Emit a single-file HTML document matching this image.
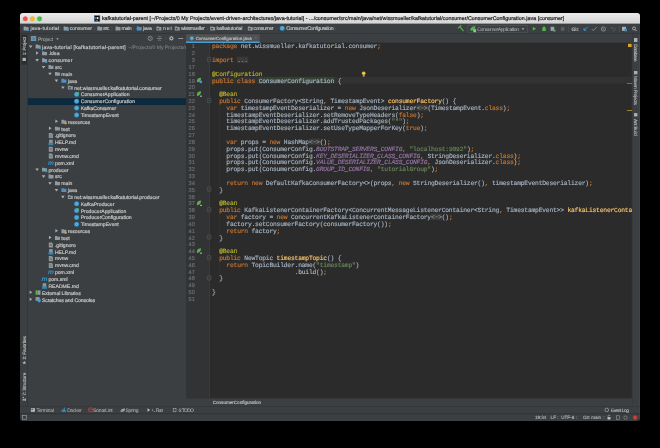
<!DOCTYPE html><html><head><meta charset="utf-8"><style>*{margin:0;padding:0}html,body{width:660px;height:448px;overflow:hidden;background:#000}svg{display:block;will-change:transform;text-rendering:geometricPrecision}</style></head><body><svg width="660" height="448" viewBox="0 0 660 448"><rect width="660" height="448" fill="#000"/><defs><clipPath id="wclip"><rect x="20" y="13" width="620" height="408.1" rx="3"/></clipPath><clipPath id="tree"><rect x="27.5" y="43" width="158.5" height="363"/></clipPath><clipPath id="code"><rect x="186" y="43" width="446" height="355"/></clipPath><linearGradient id="tg" x1="0" y1="0" x2="0" y2="1"><stop offset="0" stop-color="#ebebeb"/><stop offset="1" stop-color="#d4d4d4"/></linearGradient></defs>
<g clip-path="url(#wclip)">
<rect x="20.00" y="13.00" width="620.00" height="408.10" fill="#3c3f41" />
<rect x="20.00" y="13.00" width="620.00" height="10.60" fill="url(#tg)" />
<rect x="20.00" y="23.40" width="620.00" height="0.50" fill="#9d9d9d" />
<circle cx="25.30" cy="18.80" r="2.30" fill="#f2544c" stroke="#d2413a" stroke-width="0.3"/>
<circle cx="32.40" cy="18.80" r="2.30" fill="#f7b928" stroke="#d99c1c" stroke-width="0.3"/>
<circle cx="39.50" cy="18.80" r="2.30" fill="#3ec23c" stroke="#2b9f2a" stroke-width="0.3"/>
<rect x="94.30" y="15.60" width="5.60" height="5.90" fill="#0d0d0d" stroke="#4678b8" stroke-width="0.5"/>
<rect x="95.60" y="17.00" width="0.60" height="2.20" fill="#e0e0e0" />
<rect x="96.80" y="17.00" width="1.60" height="2.20" fill="#e0e0e0" />
<rect x="95.60" y="20.20" width="2.40" height="0.40" fill="#e0e0e0" />
<text x="101.90" y="20.30" font-family="Liberation Sans" font-size="5.3" font-weight="normal" fill="#262626" textLength="462.40" lengthAdjust="spacing"  stroke="#262626" stroke-width="0.22">kafkatutorial-parent [~/Projects/0 My Projects/event-driven-architectures/java-tutorial] - .../consumer/src/main/java/net/wissmueller/kafkatutorial/consumer/ConsumerConfiguration.java [consumer]</text>
<rect x="20.00" y="33.20" width="620.00" height="0.60" fill="#2e3032" />
<path d="M23.60 26.50h2.1l0.5 0.6h2.4v3.3h-5z" fill="#8d9ba5" />
<rect x="26.90" y="29.10" width="1.90" height="1.90" fill="#389fd6" />
<text x="30.50" y="30.20" font-family="Liberation Sans" font-size="5.2" font-weight="normal" fill="#c4c4c4" textLength="28.50" lengthAdjust="spacing"  stroke="#c4c4c4" stroke-width="0.15">java-tutorial</text>
<path d="M63.60 26.50h2.1l0.5 0.6h2.4v3.3h-5z" fill="#8d9ba5" />
<rect x="66.90" y="29.10" width="1.90" height="1.90" fill="#389fd6" />
<text x="69.70" y="30.20" font-family="Liberation Sans" font-size="5.2" font-weight="normal" fill="#c4c4c4" textLength="22.40" lengthAdjust="spacing"  stroke="#c4c4c4" stroke-width="0.15">consumer</text>
<path d="M97.30 26.50h2.1l0.5 0.6h2.4v3.3h-5z" fill="#8d9ba5" />
<text x="103.30" y="30.20" font-family="Liberation Sans" font-size="5.2" font-weight="normal" fill="#c4c4c4" textLength="6.10" lengthAdjust="spacing"  stroke="#c4c4c4" stroke-width="0.15">src</text>
<path d="M115.50 26.50h2.1l0.5 0.6h2.4v3.3h-5z" fill="#8d9ba5" />
<text x="121.50" y="30.20" font-family="Liberation Sans" font-size="5.2" font-weight="normal" fill="#c4c4c4" textLength="10.20" lengthAdjust="spacing"  stroke="#c4c4c4" stroke-width="0.15">main</text>
<path d="M136.70 26.50h2.1l0.5 0.6h2.4v3.3h-5z" fill="#4e93c6" />
<text x="143.00" y="30.20" font-family="Liberation Sans" font-size="5.2" font-weight="normal" fill="#c4c4c4" textLength="8.80" lengthAdjust="spacing"  stroke="#c4c4c4" stroke-width="0.15">java</text>
<path d="M156.40 26.50h2.1l0.5 0.6h2.4v3.3h-5z" fill="#8d9ba5" />
<rect x="157.40" y="28.10" width="1.80" height="1.30" fill="#3c3f41" />
<text x="163.00" y="30.20" font-family="Liberation Sans" font-size="5.2" font-weight="normal" fill="#c4c4c4" textLength="9.00" lengthAdjust="spacing"  stroke="#c4c4c4" stroke-width="0.15">net</text>
<path d="M174.80 26.50h2.1l0.5 0.6h2.4v3.3h-5z" fill="#8d9ba5" />
<rect x="175.80" y="28.10" width="1.80" height="1.30" fill="#3c3f41" />
<text x="180.90" y="30.20" font-family="Liberation Sans" font-size="5.2" font-weight="normal" fill="#c4c4c4" textLength="23.90" lengthAdjust="spacing"  stroke="#c4c4c4" stroke-width="0.15">wissmueller</text>
<path d="M210.20 26.50h2.1l0.5 0.6h2.4v3.3h-5z" fill="#8d9ba5" />
<rect x="211.20" y="28.10" width="1.80" height="1.30" fill="#3c3f41" />
<text x="216.50" y="30.20" font-family="Liberation Sans" font-size="5.2" font-weight="normal" fill="#c4c4c4" textLength="25.80" lengthAdjust="spacing"  stroke="#c4c4c4" stroke-width="0.15">kafkatutorial</text>
<path d="M247.80 26.50h2.1l0.5 0.6h2.4v3.3h-5z" fill="#8d9ba5" />
<rect x="248.80" y="28.10" width="1.80" height="1.30" fill="#3c3f41" />
<text x="253.60" y="30.20" font-family="Liberation Sans" font-size="5.2" font-weight="normal" fill="#c4c4c4" textLength="20.00" lengthAdjust="spacing"  stroke="#c4c4c4" stroke-width="0.15">consumer</text>
<circle cx="282.20" cy="28.30" r="2.50" fill="#3592c4" />
<circle cx="282.20" cy="28.30" r="1.12" fill="none" stroke="#a9d2ea" stroke-width="0.5"/>
<text x="286.20" y="30.20" font-family="Liberation Sans" font-size="5.2" font-weight="normal" fill="#c4c4c4" textLength="47.40" lengthAdjust="spacing"  stroke="#c4c4c4" stroke-width="0.15">ConsumerConfiguration</text>
<path d="M59.90 27.2l1.2 1.6-1.2 1.6" fill="none" stroke="#5d6062" stroke-width="0.45" />
<path d="M93.90 27.2l1.2 1.6-1.2 1.6" fill="none" stroke="#5d6062" stroke-width="0.45" />
<path d="M111.40 27.2l1.2 1.6-1.2 1.6" fill="none" stroke="#5d6062" stroke-width="0.45" />
<path d="M132.90 27.2l1.2 1.6-1.2 1.6" fill="none" stroke="#5d6062" stroke-width="0.45" />
<path d="M152.90 27.2l1.2 1.6-1.2 1.6" fill="none" stroke="#5d6062" stroke-width="0.45" />
<path d="M171.40 27.2l1.2 1.6-1.2 1.6" fill="none" stroke="#5d6062" stroke-width="0.45" />
<path d="M206.90 27.2l1.2 1.6-1.2 1.6" fill="none" stroke="#5d6062" stroke-width="0.45" />
<path d="M244.40 27.2l1.2 1.6-1.2 1.6" fill="none" stroke="#5d6062" stroke-width="0.45" />
<path d="M275.90 27.2l1.2 1.6-1.2 1.6" fill="none" stroke="#5d6062" stroke-width="0.45" />
<path d="M334.90 27.2l1.2 1.6-1.2 1.6" fill="none" stroke="#5d6062" stroke-width="0.45" />
<path d="M458.3 27.9l2.6-2.2 M459.9 26.9l3.3 3.8" fill="none" stroke="#4fb547" stroke-width="1.2" stroke-linecap="round"/>
<rect x="467.60" y="25.40" width="60.00" height="7.30" fill="#3c3f41" stroke="#5e6163" stroke-width="0.5" rx="0.8"/>
<path d="M470.2 30.2c0-2.8 2.2-4 5.2-4 0 2.8-1.5 4.6-4.6 4.6z" fill="#4fb547" />
<rect x="473.30" y="29.20" width="2.80" height="3.00" fill="#a9b4ba" />
<text x="477.30" y="30.60" font-family="Liberation Sans" font-size="5.1" font-weight="normal" fill="#bbbbbb" textLength="41.70" lengthAdjust="spacing" >ConsumerApplication</text>
<path d="M521.5 28.3h3l-1.5 1.8z" fill="#a5a8aa" />
<path d="M532.8 26.8v3.9l3.2-1.95z" fill="#4fb547" />
<path d="M542.2 30.9v-2.2a1.8 1.8 0 0 1 3.6 0v2.2z" fill="#4fb547" />
<rect x="543.00" y="26.60" width="2.00" height="1.40" fill="#4fb547" rx="0.5" />
<rect x="550.60" y="26.80" width="3.60" height="4.00" fill="#9aa5ad" />
<rect x="553.20" y="29.40" width="2.20" height="2.20" fill="#59a869" />
<rect x="560.90" y="27.20" width="3.60" height="3.60" fill="#5b5e60" />
<rect x="568.60" y="25.80" width="0.50" height="6.50" fill="#55585b" />
<text x="571.60" y="30.50" font-family="Liberation Sans" font-size="4.8" font-weight="normal" fill="#bbbbbb"  stroke="#bbbbbb" stroke-width="0.15">Git:</text>
<path d="M587.6 26.8l-3.3 3.3 M584.0 28.0v2.3h2.3" fill="none" stroke="#3e94d6" stroke-width="0.9" />
<path d="M591.8 29l1.5 1.6 3.2-3.4" fill="none" stroke="#59a869" stroke-width="0.9" />
<circle cx="603.40" cy="29.00" r="2.10" fill="none" stroke="#a5a8aa" stroke-width="0.65"/>
<path d="M602.4 27.8l1.8 2.6" fill="none" stroke="#a5a8aa" stroke-width="0.6" />
<path d="M611 28h3a1.4 1.4 0 0 1 0 2.8h-2 M611 28l1-1 M611 28l1 1" fill="none" stroke="#5f6264" stroke-width="0.6" />
<rect x="619.40" y="25.80" width="0.50" height="6.50" fill="#55585b" />
<rect x="622.00" y="26.80" width="4.00" height="4.00" fill="#a5b1b8" />
<rect x="624.60" y="28.60" width="2.40" height="2.80" fill="#3a8ac4" />
<circle cx="634.00" cy="28.40" r="1.50" fill="none" stroke="#c0c0c0" stroke-width="0.75"/>
<path d="M635.1 29.5l1.5 1.5" fill="none" stroke="#c0c0c0" stroke-width="0.9" />
<rect x="27.00" y="33.80" width="0.60" height="372.50" fill="#2f3133" />
<rect x="21.30" y="34.60" width="5.70" height="30.00" fill="#2c2e2f" />
<text transform="translate(26.00,55.20) rotate(-90)" font-family="Liberation Sans" font-size="4.7" fill="#bbbbbb" stroke="#bbbbbb" stroke-width="0.15" textLength="18.30" lengthAdjust="spacing">1: Project</text>
<rect x="22.50" y="57.80" width="3.40" height="3.20" fill="#a5b1b8" />
<text transform="translate(26.00,359.50) rotate(-90)" font-family="Liberation Sans" font-size="4.7" fill="#bbbbbb" stroke="#bbbbbb" stroke-width="0.15" textLength="23.25" lengthAdjust="spacing">2: Favorites</text>
<path d="M24.3 360.8l0.55 1.2 1.3 0.15-0.95 0.9 0.25 1.3-1.15-0.65-1.15 0.65 0.25-1.3-0.95-0.9 1.3-0.15z" fill="#b0b3b5" />
<text transform="translate(26.00,395.50) rotate(-90)" font-family="Liberation Sans" font-size="4.7" fill="#bbbbbb" stroke="#bbbbbb" stroke-width="0.15" textLength="22.80" lengthAdjust="spacing">7: Structure</text>
<rect x="22.60" y="396.90" width="1.30" height="1.30" fill="#b0b3b5" />
<rect x="22.60" y="399.00" width="1.30" height="1.60" fill="#b0b3b5" />
<rect x="24.40" y="398.60" width="1.60" height="2.20" fill="#b0b3b5" />
<rect x="30.90" y="36.10" width="5.30" height="4.90" fill="#8d969b" />
<rect x="31.60" y="37.30" width="3.90" height="3.00" fill="#3b8fc6" />
<text x="38.00" y="40.60" font-family="Liberation Sans" font-size="5.1" font-weight="normal" fill="#bbbbbb" textLength="15.00" lengthAdjust="spacing" >Project</text>
<path d="M56.2 38.2h2.6l-1.3 1.7z" fill="#a5a8aa" />
<circle cx="150.20" cy="38.40" r="2.10" fill="none" stroke="#a4a7aa" stroke-width="0.6"/>
<path d="M149.5 37.2l1.3 1.2-1.3 1.2" fill="none" stroke="#a4a7aa" stroke-width="0.6" />
<path d="M157 38.4h5 M158.3 35.9l1.2 1.2 1.2-1.2 M158.3 40.9l1.2-1.2 1.2 1.2" fill="none" stroke="#a4a7aa" stroke-width="0.6" />
<rect x="165.20" y="35.30" width="0.50" height="6.20" fill="#4d5052" />
<path d="M173.95 38.40 L173.11 39.11 L173.20 40.20 L172.11 40.11 L171.40 40.95 L170.69 40.11 L169.60 40.20 L169.69 39.11 L168.85 38.40 L169.69 37.69 L169.60 36.60 L170.69 36.69 L171.40 35.85 L172.11 36.69 L173.20 36.60 L173.11 37.69z" fill="#a4a7aa" />
<circle cx="171.40" cy="38.40" r="0.80" fill="#3c3f41" />
<rect x="178.30" y="38.00" width="4.90" height="0.80" fill="#a4a7aa" />
<g clip-path="url(#tree)">
<path d="M28.90 45.40h3.5l-1.75 2.6z" fill="#adb0b2" />
<path d="M35.60 44.60h2.1l0.5 0.6h2.4v3.3h-5z" fill="#8d9ba5" />
<rect x="38.90" y="47.20" width="1.90" height="1.90" fill="#389fd6" />
<text x="42.00" y="48.50" font-family="Liberation Sans" font-size="5.1" font-weight="normal" fill="#c4c4c4" textLength="83.60" lengthAdjust="spacing"  stroke="#c4c4c4" stroke-width="0.2">java-tutorial [kafkatutorial-parent]</text>
<text x="128.20" y="48.50" font-family="Liberation Sans" font-size="5.1" font-weight="normal" fill="#8e8e8e" >~/Projects/0 My Projects/event-driven-architectures/java-tutorial</text>
<path d="M36.05 51.24v3.5l2.6 -1.75z" fill="#adb0b2" />
<path d="M42.05 51.44h2.1l0.5 0.6h2.4v3.3h-5z" fill="#8d9ba5" />
<text x="48.45" y="55.34" font-family="Liberation Sans" font-size="5.1" font-weight="normal" fill="#c4c4c4"  stroke="#c4c4c4" stroke-width="0.2">.idea</text>
<path d="M35.35 59.08h3.5l-1.75 2.6z" fill="#adb0b2" />
<path d="M42.05 58.28h2.1l0.5 0.6h2.4v3.3h-5z" fill="#8d9ba5" />
<rect x="45.35" y="60.88" width="1.90" height="1.90" fill="#389fd6" />
<text x="48.45" y="62.18" font-family="Liberation Sans" font-size="5.1" font-weight="normal" fill="#c4c4c4" textLength="23.90" lengthAdjust="spacing"  stroke="#c4c4c4" stroke-width="0.2">consumer</text>
<path d="M41.80 65.91h3.5l-1.75 2.6z" fill="#adb0b2" />
<path d="M48.50 65.11h2.1l0.5 0.6h2.4v3.3h-5z" fill="#8d9ba5" />
<text x="54.90" y="69.01" font-family="Liberation Sans" font-size="5.1" font-weight="normal" fill="#c4c4c4"  stroke="#c4c4c4" stroke-width="0.2">src</text>
<path d="M48.25 72.75h3.5l-1.75 2.6z" fill="#adb0b2" />
<path d="M54.95 71.95h2.1l0.5 0.6h2.4v3.3h-5z" fill="#8d9ba5" />
<text x="61.35" y="75.85" font-family="Liberation Sans" font-size="5.1" font-weight="normal" fill="#c4c4c4"  stroke="#c4c4c4" stroke-width="0.2">main</text>
<path d="M54.70 79.59h3.5l-1.75 2.6z" fill="#adb0b2" />
<path d="M61.40 78.79h2.1l0.5 0.6h2.4v3.3h-5z" fill="#4e93c6" />
<text x="67.80" y="82.69" font-family="Liberation Sans" font-size="5.1" font-weight="normal" fill="#c4c4c4"  stroke="#c4c4c4" stroke-width="0.2">java</text>
<path d="M61.15 86.43h3.5l-1.75 2.6z" fill="#adb0b2" />
<path d="M67.85 85.63h2.1l0.5 0.6h2.4v3.3h-5z" fill="#8d9ba5" />
<rect x="68.85" y="87.23" width="1.80" height="1.30" fill="#3c3f41" />
<text x="74.25" y="89.53" font-family="Liberation Sans" font-size="5.1" font-weight="normal" fill="#c4c4c4"  stroke="#c4c4c4" stroke-width="0.2">net.wissmueller.kafkatutorial.consumer</text>
<circle cx="76.60" cy="94.37" r="2.50" fill="#3592c4" />
<circle cx="76.60" cy="94.37" r="1.12" fill="none" stroke="#a9d2ea" stroke-width="0.5"/>
<circle cx="77.80" cy="93.17" r="1.20" fill="#5fb641" />
<text x="80.70" y="96.37" font-family="Liberation Sans" font-size="5.1" font-weight="normal" fill="#c4c4c4" textLength="48.80" lengthAdjust="spacing"  stroke="#c4c4c4" stroke-width="0.2">ConsumerApplication</text>
<rect x="27.60" y="98.20" width="158.40" height="6.84" fill="#0d293e" />
<circle cx="76.60" cy="101.20" r="2.50" fill="#3592c4" />
<circle cx="76.60" cy="101.20" r="1.12" fill="none" stroke="#a9d2ea" stroke-width="0.5"/>
<text x="80.70" y="103.20" font-family="Liberation Sans" font-size="5.1" font-weight="normal" fill="#c4c4c4" textLength="54.30" lengthAdjust="spacing"  stroke="#c4c4c4" stroke-width="0.2">ConsumerConfiguration</text>
<circle cx="76.60" cy="108.04" r="2.50" fill="#3592c4" />
<circle cx="76.60" cy="108.04" r="1.12" fill="none" stroke="#a9d2ea" stroke-width="0.5"/>
<text x="80.70" y="110.04" font-family="Liberation Sans" font-size="5.1" font-weight="normal" fill="#c4c4c4" textLength="35.50" lengthAdjust="spacing"  stroke="#c4c4c4" stroke-width="0.2">KafkaConsumer</text>
<circle cx="76.60" cy="114.88" r="2.50" fill="#3592c4" />
<circle cx="76.60" cy="114.88" r="1.12" fill="none" stroke="#a9d2ea" stroke-width="0.5"/>
<text x="80.70" y="116.88" font-family="Liberation Sans" font-size="5.1" font-weight="normal" fill="#c4c4c4"  stroke="#c4c4c4" stroke-width="0.2">TimestampEvent</text>
<path d="M55.40 119.62v3.5l2.6 -1.75z" fill="#adb0b2" />
<path d="M61.40 119.82h2.1l0.5 0.6h2.4v3.3h-5z" fill="#8d9ba5" />
<rect x="64.70" y="122.42" width="1.90" height="1.90" fill="#d9a343" />
<text x="67.80" y="123.72" font-family="Liberation Sans" font-size="5.1" font-weight="normal" fill="#c4c4c4"  stroke="#c4c4c4" stroke-width="0.2">resources</text>
<path d="M48.95 126.46v3.5l2.6 -1.75z" fill="#adb0b2" />
<path d="M54.95 126.66h2.1l0.5 0.6h2.4v3.3h-5z" fill="#8d9ba5" />
<text x="61.35" y="130.56" font-family="Liberation Sans" font-size="5.1" font-weight="normal" fill="#c4c4c4"  stroke="#c4c4c4" stroke-width="0.2">test</text>
<path d="M48.80 132.99h2.9l1.2 1.2v3.9h-4.1z" fill="#8f999e" />
<rect x="49.50" y="134.69" width="2.60" height="0.50" fill="#5d6569" />
<rect x="49.50" y="135.89" width="2.60" height="0.50" fill="#5d6569" />
<text x="54.90" y="137.39" font-family="Liberation Sans" font-size="5.1" font-weight="normal" fill="#c4c4c4"  stroke="#c4c4c4" stroke-width="0.2">.gitignore</text>
<rect x="49.10" y="139.63" width="3.60" height="4.40" fill="#8a969c" />
<rect x="48.50" y="142.83" width="4.80" height="2.40" fill="#3584b0" />
<text x="54.90" y="144.23" font-family="Liberation Sans" font-size="5.1" font-weight="normal" fill="#c4c4c4"  stroke="#c4c4c4" stroke-width="0.2">HELP.md</text>
<path d="M48.80 146.67h2.9l1.2 1.2v3.9h-4.1z" fill="#8f999e" />
<rect x="49.50" y="148.37" width="2.60" height="0.50" fill="#5d6569" />
<rect x="49.50" y="149.57" width="2.60" height="0.50" fill="#5d6569" />
<text x="54.90" y="151.07" font-family="Liberation Sans" font-size="5.1" font-weight="normal" fill="#c4c4c4"  stroke="#c4c4c4" stroke-width="0.2">mvnw</text>
<path d="M48.80 153.51h2.9l1.2 1.2v3.9h-4.1z" fill="#8f999e" />
<rect x="49.50" y="155.21" width="2.60" height="0.50" fill="#5d6569" />
<rect x="49.50" y="156.41" width="2.60" height="0.50" fill="#5d6569" />
<text x="54.90" y="157.91" font-family="Liberation Sans" font-size="5.1" font-weight="normal" fill="#c4c4c4"  stroke="#c4c4c4" stroke-width="0.2">mvnw.cmd</text>
<text x="47.90" y="165.05" font-family="Liberation Sans" font-size="6.6" font-weight="bold" fill="#3592c4" font-style="italic">m</text>
<text x="54.90" y="164.75" font-family="Liberation Sans" font-size="5.1" font-weight="normal" fill="#c4c4c4"  stroke="#c4c4c4" stroke-width="0.2">pom.xml</text>
<path d="M35.35 168.48h3.5l-1.75 2.6z" fill="#adb0b2" />
<path d="M42.05 167.68h2.1l0.5 0.6h2.4v3.3h-5z" fill="#8d9ba5" />
<rect x="45.35" y="170.28" width="1.90" height="1.90" fill="#389fd6" />
<text x="48.45" y="171.58" font-family="Liberation Sans" font-size="5.1" font-weight="normal" fill="#c4c4c4"  stroke="#c4c4c4" stroke-width="0.2">producer</text>
<path d="M41.80 175.32h3.5l-1.75 2.6z" fill="#adb0b2" />
<path d="M48.50 174.52h2.1l0.5 0.6h2.4v3.3h-5z" fill="#8d9ba5" />
<text x="54.90" y="178.42" font-family="Liberation Sans" font-size="5.1" font-weight="normal" fill="#c4c4c4"  stroke="#c4c4c4" stroke-width="0.2">src</text>
<path d="M48.25 182.16h3.5l-1.75 2.6z" fill="#adb0b2" />
<path d="M54.95 181.36h2.1l0.5 0.6h2.4v3.3h-5z" fill="#8d9ba5" />
<text x="61.35" y="185.26" font-family="Liberation Sans" font-size="5.1" font-weight="normal" fill="#c4c4c4"  stroke="#c4c4c4" stroke-width="0.2">main</text>
<path d="M54.70 189.00h3.5l-1.75 2.6z" fill="#adb0b2" />
<path d="M61.40 188.20h2.1l0.5 0.6h2.4v3.3h-5z" fill="#4e93c6" />
<text x="67.80" y="192.10" font-family="Liberation Sans" font-size="5.1" font-weight="normal" fill="#c4c4c4"  stroke="#c4c4c4" stroke-width="0.2">java</text>
<path d="M61.15 195.84h3.5l-1.75 2.6z" fill="#adb0b2" />
<path d="M67.85 195.04h2.1l0.5 0.6h2.4v3.3h-5z" fill="#8d9ba5" />
<rect x="68.85" y="196.64" width="1.80" height="1.30" fill="#3c3f41" />
<text x="74.25" y="198.94" font-family="Liberation Sans" font-size="5.1" font-weight="normal" fill="#c4c4c4"  stroke="#c4c4c4" stroke-width="0.2">net.wissmueller.kafkatutorial.producer</text>
<circle cx="76.60" cy="203.77" r="2.50" fill="#3592c4" />
<circle cx="76.60" cy="203.77" r="1.12" fill="none" stroke="#a9d2ea" stroke-width="0.5"/>
<text x="80.70" y="205.77" font-family="Liberation Sans" font-size="5.1" font-weight="normal" fill="#c4c4c4"  stroke="#c4c4c4" stroke-width="0.2">KafkaProducer</text>
<circle cx="76.60" cy="210.61" r="2.50" fill="#3592c4" />
<circle cx="76.60" cy="210.61" r="1.12" fill="none" stroke="#a9d2ea" stroke-width="0.5"/>
<circle cx="77.80" cy="209.41" r="1.20" fill="#5fb641" />
<text x="80.70" y="212.61" font-family="Liberation Sans" font-size="5.1" font-weight="normal" fill="#c4c4c4"  stroke="#c4c4c4" stroke-width="0.2">ProducerApplication</text>
<circle cx="76.60" cy="217.45" r="2.50" fill="#3592c4" />
<circle cx="76.60" cy="217.45" r="1.12" fill="none" stroke="#a9d2ea" stroke-width="0.5"/>
<text x="80.70" y="219.45" font-family="Liberation Sans" font-size="5.1" font-weight="normal" fill="#c4c4c4"  stroke="#c4c4c4" stroke-width="0.2">ProducerConfiguration</text>
<circle cx="76.60" cy="224.29" r="2.50" fill="#3592c4" />
<circle cx="76.60" cy="224.29" r="1.12" fill="none" stroke="#a9d2ea" stroke-width="0.5"/>
<text x="80.70" y="226.29" font-family="Liberation Sans" font-size="5.1" font-weight="normal" fill="#c4c4c4"  stroke="#c4c4c4" stroke-width="0.2">TimestampEvent</text>
<path d="M55.40 229.03v3.5l2.6 -1.75z" fill="#adb0b2" />
<path d="M61.40 229.23h2.1l0.5 0.6h2.4v3.3h-5z" fill="#8d9ba5" />
<rect x="64.70" y="231.83" width="1.90" height="1.90" fill="#d9a343" />
<text x="67.80" y="233.13" font-family="Liberation Sans" font-size="5.1" font-weight="normal" fill="#c4c4c4"  stroke="#c4c4c4" stroke-width="0.2">resources</text>
<path d="M48.95 235.86v3.5l2.6 -1.75z" fill="#adb0b2" />
<path d="M54.95 236.06h2.1l0.5 0.6h2.4v3.3h-5z" fill="#8d9ba5" />
<text x="61.35" y="239.96" font-family="Liberation Sans" font-size="5.1" font-weight="normal" fill="#c4c4c4"  stroke="#c4c4c4" stroke-width="0.2">test</text>
<path d="M48.80 242.40h2.9l1.2 1.2v3.9h-4.1z" fill="#8f999e" />
<rect x="49.50" y="244.10" width="2.60" height="0.50" fill="#5d6569" />
<rect x="49.50" y="245.30" width="2.60" height="0.50" fill="#5d6569" />
<text x="54.90" y="246.80" font-family="Liberation Sans" font-size="5.1" font-weight="normal" fill="#c4c4c4"  stroke="#c4c4c4" stroke-width="0.2">.gitignore</text>
<rect x="49.10" y="249.04" width="3.60" height="4.40" fill="#8a969c" />
<rect x="48.50" y="252.24" width="4.80" height="2.40" fill="#3584b0" />
<text x="54.90" y="253.64" font-family="Liberation Sans" font-size="5.1" font-weight="normal" fill="#c4c4c4"  stroke="#c4c4c4" stroke-width="0.2">HELP.md</text>
<path d="M48.80 256.08h2.9l1.2 1.2v3.9h-4.1z" fill="#8f999e" />
<rect x="49.50" y="257.78" width="2.60" height="0.50" fill="#5d6569" />
<rect x="49.50" y="258.98" width="2.60" height="0.50" fill="#5d6569" />
<text x="54.90" y="260.48" font-family="Liberation Sans" font-size="5.1" font-weight="normal" fill="#c4c4c4"  stroke="#c4c4c4" stroke-width="0.2">mvnw</text>
<path d="M48.80 262.92h2.9l1.2 1.2v3.9h-4.1z" fill="#8f999e" />
<rect x="49.50" y="264.62" width="2.60" height="0.50" fill="#5d6569" />
<rect x="49.50" y="265.82" width="2.60" height="0.50" fill="#5d6569" />
<text x="54.90" y="267.32" font-family="Liberation Sans" font-size="5.1" font-weight="normal" fill="#c4c4c4"  stroke="#c4c4c4" stroke-width="0.2">mvnw.cmd</text>
<text x="47.90" y="274.45" font-family="Liberation Sans" font-size="6.6" font-weight="bold" fill="#3592c4" font-style="italic">m</text>
<text x="54.90" y="274.15" font-family="Liberation Sans" font-size="5.1" font-weight="normal" fill="#c4c4c4"  stroke="#c4c4c4" stroke-width="0.2">pom.xml</text>
<text x="41.45" y="281.29" font-family="Liberation Sans" font-size="6.6" font-weight="bold" fill="#3592c4" font-style="italic">m</text>
<text x="48.45" y="280.99" font-family="Liberation Sans" font-size="5.1" font-weight="normal" fill="#c4c4c4"  stroke="#c4c4c4" stroke-width="0.2">pom.xml</text>
<rect x="42.65" y="283.23" width="3.60" height="4.40" fill="#8a969c" />
<rect x="42.05" y="286.43" width="4.80" height="2.40" fill="#3584b0" />
<text x="48.45" y="287.83" font-family="Liberation Sans" font-size="5.1" font-weight="normal" fill="#c4c4c4"  stroke="#c4c4c4" stroke-width="0.2">README.md</text>
<path d="M29.60 290.57v3.5l2.6 -1.75z" fill="#adb0b2" />
<rect x="35.60" y="290.37" width="1.40" height="4.40" fill="#5fb641" />
<rect x="37.30" y="290.37" width="3.20" height="4.40" fill="#8d9ba5" />
<text x="42.00" y="294.67" font-family="Liberation Sans" font-size="5.1" font-weight="normal" fill="#c4c4c4" textLength="38.70" lengthAdjust="spacing"  stroke="#c4c4c4" stroke-width="0.2">External Libraries</text>
<path d="M29.60 297.41v3.5l2.6 -1.75z" fill="#adb0b2" />
<rect x="35.60" y="297.11" width="4.00" height="3.60" fill="#8d9ba5" />
<circle cx="39.10" cy="300.61" r="1.80" fill="#3a9ee0" />
<text x="42.00" y="301.51" font-family="Liberation Sans" font-size="5.1" font-weight="normal" fill="#c4c4c4" textLength="53.00" lengthAdjust="spacing"  stroke="#c4c4c4" stroke-width="0.2">Scratches and Consoles</text>
</g>
<rect x="186.00" y="33.80" width="446.00" height="9.20" fill="#3c3f41" />
<rect x="186.00" y="34.10" width="73.80" height="7.50" fill="#4e5254" />
<rect x="186.00" y="41.50" width="73.80" height="1.50" fill="#4a9fd5" />
<rect x="259.80" y="42.40" width="372.00" height="0.60" fill="#323232" />
<circle cx="191.80" cy="38.30" r="2.15" fill="#3592c4" />
<circle cx="191.80" cy="38.30" r="0.97" fill="none" stroke="#a9d2ea" stroke-width="0.5"/>
<text x="195.70" y="39.90" font-family="Liberation Sans" font-size="4.4" font-weight="normal" fill="#c0c0c0" textLength="55.90" lengthAdjust="spacing"  stroke="#c0c0c0" stroke-width="0.15">ConsumerConfiguration.java</text>
<path d="M254.6 36.6l2.3 2.3 M256.9 36.6l-2.3 2.3" fill="none" stroke="#6f7274" stroke-width="0.5" />
<rect x="186.00" y="43.00" width="446.00" height="355.00" fill="#2b2b2b" />
<rect x="630.70" y="43.00" width="1.30" height="355.00" fill="#2e2e2e" />
<rect x="186.00" y="43.00" width="23.60" height="355.00" fill="#313335" />
<rect x="209.10" y="43.00" width="0.60" height="355.00" fill="#404244" />
<rect x="186.00" y="398.00" width="446.00" height="8.40" fill="#3c3f41" />
<rect x="186.00" y="398.00" width="446.00" height="0.50" fill="#323232" />
<text x="212.70" y="403.60" font-family="Liberation Sans" font-size="4.6" font-weight="normal" fill="#c0c0c0" textLength="48.30" lengthAdjust="spacing"  stroke="#c0c0c0" stroke-width="0.15">ConsumerConfiguration</text>
<g clip-path="url(#code)">
<rect x="209.50" y="76.83" width="422.00" height="6.83" fill="#323232" />
<rect x="218.93" y="104.12" width="0.50" height="81.90" fill="#393939" />
<rect x="218.93" y="213.33" width="0.50" height="20.48" fill="#393939" />
<rect x="218.93" y="261.10" width="0.50" height="13.65" fill="#393939" />
<rect x="207.40" y="57.45" width="3.40" height="4.20" fill="#313335" stroke="#5e6164" stroke-width="0.55" rx="0.5"/>
<rect x="208.20" y="59.45" width="1.60" height="0.40" fill="#6a6d70" />
<rect x="207.40" y="98.40" width="3.40" height="4.20" fill="#313335" stroke="#5e6164" stroke-width="0.55" rx="0.5"/>
<rect x="208.20" y="100.40" width="1.60" height="0.40" fill="#6a6d70" />
<rect x="207.40" y="187.13" width="3.40" height="4.20" fill="#313335" stroke="#5e6164" stroke-width="0.55" rx="0.5"/>
<rect x="208.20" y="189.13" width="1.60" height="0.40" fill="#6a6d70" />
<rect x="207.40" y="207.60" width="3.40" height="4.20" fill="#313335" stroke="#5e6164" stroke-width="0.55" rx="0.5"/>
<rect x="208.20" y="209.60" width="1.60" height="0.40" fill="#6a6d70" />
<rect x="207.40" y="234.90" width="3.40" height="4.20" fill="#313335" stroke="#5e6164" stroke-width="0.55" rx="0.5"/>
<rect x="208.20" y="236.90" width="1.60" height="0.40" fill="#6a6d70" />
<rect x="207.40" y="255.38" width="3.40" height="4.20" fill="#313335" stroke="#5e6164" stroke-width="0.55" rx="0.5"/>
<rect x="208.20" y="257.38" width="1.60" height="0.40" fill="#6a6d70" />
<rect x="207.40" y="275.85" width="3.40" height="4.20" fill="#313335" stroke="#5e6164" stroke-width="0.55" rx="0.5"/>
<rect x="208.20" y="277.85" width="1.60" height="0.40" fill="#6a6d70" />
<path d="M196.80 81.33c0-2.6 2-3.6 4.3-3.6 0 2.6-1.3 4.6-3.9 4.6z" fill="#5fae4d" />
<circle cx="200.80" cy="81.93" r="1.40" fill="#3b9bd8" />
<path d="M196.80 94.97c0-2.6 2-3.6 4.3-3.6 0 2.6-1.3 4.6-3.9 4.6z" fill="#5fae4d" />
<path d="M199.80 96.77h2.4l-1.2-1.8z" fill="#b8bdc0" />
<path d="M196.80 204.18c0-2.6 2-3.6 4.3-3.6 0 2.6-1.3 4.6-3.9 4.6z" fill="#5fae4d" />
<path d="M199.80 205.97h2.4l-1.2-1.8z" fill="#b8bdc0" />
<path d="M196.80 251.95c0-2.6 2-3.6 4.3-3.6 0 2.6-1.3 4.6-3.9 4.6z" fill="#5fae4d" />
<path d="M199.80 253.75h2.4l-1.2-1.8z" fill="#b8bdc0" />
<circle cx="363.70" cy="73.20" r="1.80" fill="#f1c24a" />
<rect x="362.70" y="75.20" width="2.00" height="1.30" fill="#b9bcbe" />
<text x="194.80" y="48.40" font-family="Liberation Sans" font-size="5.6" font-weight="normal" fill="#686b6e" text-anchor="end"  stroke="#686b6e" stroke-width="0.22">1</text>
<text x="212.00" y="48.40" font-family="Liberation Mono" font-size="6.3" letter-spacing="-0.190" fill="#cc7832" stroke="#cc7832" stroke-width="0.13" xml:space="preserve">package</text>
<text x="237.13" y="48.40" font-family="Liberation Mono" font-size="6.3" letter-spacing="-0.190" fill="#a9b7c6" stroke="#a9b7c6" stroke-width="0.13" xml:space="preserve"> net.wissmueller.kafkatutorial.consumer</text>
<text x="377.14" y="48.40" font-family="Liberation Mono" font-size="6.3" letter-spacing="-0.190" fill="#cc7832" stroke="#cc7832" stroke-width="0.13" xml:space="preserve">;</text>
<text x="194.80" y="55.23" font-family="Liberation Sans" font-size="5.6" font-weight="normal" fill="#686b6e" text-anchor="end"  stroke="#686b6e" stroke-width="0.22">2</text>
<text x="194.80" y="62.05" font-family="Liberation Sans" font-size="5.6" font-weight="normal" fill="#686b6e" text-anchor="end"  stroke="#686b6e" stroke-width="0.22">3</text>
<text x="212.00" y="62.05" font-family="Liberation Mono" font-size="6.3" letter-spacing="-0.190" fill="#cc7832" stroke="#cc7832" stroke-width="0.13" xml:space="preserve">import</text>
<rect x="236.83" y="56.65" width="11.37" height="6.33" fill="#3a3a3a" />
<text x="237.13" y="62.05" font-family="Liberation Mono" font-size="6.3" letter-spacing="-0.190" fill="#8e8e8e" stroke="#8e8e8e" stroke-width="0.13" xml:space="preserve">...</text>
<text x="194.80" y="68.88" font-family="Liberation Sans" font-size="5.6" font-weight="normal" fill="#686b6e" text-anchor="end"  stroke="#686b6e" stroke-width="0.22">17</text>
<text x="194.80" y="75.70" font-family="Liberation Sans" font-size="5.6" font-weight="normal" fill="#686b6e" text-anchor="end"  stroke="#686b6e" stroke-width="0.22">18</text>
<text x="212.00" y="75.70" font-family="Liberation Mono" font-size="6.3" letter-spacing="-0.190" fill="#bbb529" stroke="#bbb529" stroke-width="0.13" xml:space="preserve">@Configuration</text>
<text x="194.80" y="82.53" font-family="Liberation Sans" font-size="5.6" font-weight="normal" fill="#686b6e" text-anchor="end"  stroke="#686b6e" stroke-width="0.22">19</text>
<text x="212.00" y="82.53" font-family="Liberation Mono" font-size="6.3" letter-spacing="-0.190" fill="#cc7832" stroke="#cc7832" stroke-width="0.13" xml:space="preserve">public class</text>
<rect x="258.67" y="76.83" width="75.39" height="6.83" fill="#344134" />
<text x="258.67" y="82.53" font-family="Liberation Mono" font-size="6.3" letter-spacing="-0.190" fill="#a9b7c6" stroke="#a9b7c6" stroke-width="0.13" xml:space="preserve">ConsumerConfiguration</text>
<text x="334.06" y="82.53" font-family="Liberation Mono" font-size="6.3" letter-spacing="-0.190" fill="#a9b7c6" stroke="#a9b7c6" stroke-width="0.13" xml:space="preserve"> {</text>
<text x="194.80" y="89.35" font-family="Liberation Sans" font-size="5.6" font-weight="normal" fill="#686b6e" text-anchor="end"  stroke="#686b6e" stroke-width="0.22">20</text>
<text x="194.80" y="96.17" font-family="Liberation Sans" font-size="5.6" font-weight="normal" fill="#686b6e" text-anchor="end"  stroke="#686b6e" stroke-width="0.22">21</text>
<text x="219.18" y="96.17" font-family="Liberation Mono" font-size="6.3" letter-spacing="-0.190" fill="#bbb529" stroke="#bbb529" stroke-width="0.13" xml:space="preserve">@Bean</text>
<text x="194.80" y="103.00" font-family="Liberation Sans" font-size="5.6" font-weight="normal" fill="#686b6e" text-anchor="end"  stroke="#686b6e" stroke-width="0.22">22</text>
<text x="219.18" y="103.00" font-family="Liberation Mono" font-size="6.3" letter-spacing="-0.190" fill="#cc7832" stroke="#cc7832" stroke-width="0.13" xml:space="preserve">public</text>
<text x="240.72" y="103.00" font-family="Liberation Mono" font-size="6.3" letter-spacing="-0.190" fill="#a9b7c6" stroke="#a9b7c6" stroke-width="0.13" xml:space="preserve"> ConsumerFactory&lt;String</text>
<text x="323.29" y="103.00" font-family="Liberation Mono" font-size="6.3" letter-spacing="-0.190" fill="#cc7832" stroke="#cc7832" stroke-width="0.13" xml:space="preserve">,</text>
<text x="326.88" y="103.00" font-family="Liberation Mono" font-size="6.3" letter-spacing="-0.190" fill="#a9b7c6" stroke="#a9b7c6" stroke-width="0.13" xml:space="preserve"> TimestampEvent&gt; </text>
<text x="387.91" y="103.00" font-family="Liberation Mono" font-size="6.3" letter-spacing="-0.190" fill="#ffc66d" stroke="#ffc66d" stroke-width="0.13" xml:space="preserve">consumerFactory</text>
<text x="441.76" y="103.00" font-family="Liberation Mono" font-size="6.3" letter-spacing="-0.190" fill="#a9b7c6" stroke="#a9b7c6" stroke-width="0.13" xml:space="preserve">() {</text>
<text x="194.80" y="109.83" font-family="Liberation Sans" font-size="5.6" font-weight="normal" fill="#686b6e" text-anchor="end"  stroke="#686b6e" stroke-width="0.22">23</text>
<text x="226.36" y="109.83" font-family="Liberation Mono" font-size="6.3" letter-spacing="-0.190" fill="#cc7832" stroke="#cc7832" stroke-width="0.13" xml:space="preserve">var</text>
<text x="237.13" y="109.83" font-family="Liberation Mono" font-size="6.3" letter-spacing="-0.190" fill="#a9b7c6" stroke="#a9b7c6" stroke-width="0.13" xml:space="preserve"> timestampEventDeserializer = </text>
<text x="344.83" y="109.83" font-family="Liberation Mono" font-size="6.3" letter-spacing="-0.190" fill="#cc7832" stroke="#cc7832" stroke-width="0.13" xml:space="preserve">new</text>
<text x="355.60" y="109.83" font-family="Liberation Mono" font-size="6.3" letter-spacing="-0.190" fill="#a9b7c6" stroke="#a9b7c6" stroke-width="0.13" xml:space="preserve"> JsonDeserializer</text>
<rect x="416.33" y="104.42" width="11.37" height="6.33" fill="#3a3a3a" />
<text x="416.63" y="109.83" font-family="Liberation Mono" font-size="6.3" letter-spacing="-0.190" fill="#8e8e8e" stroke="#8e8e8e" stroke-width="0.13" xml:space="preserve">&lt;~&gt;</text>
<text x="427.40" y="109.83" font-family="Liberation Mono" font-size="6.3" letter-spacing="-0.190" fill="#a9b7c6" stroke="#a9b7c6" stroke-width="0.13" xml:space="preserve">(TimestampEvent.</text>
<text x="484.84" y="109.83" font-family="Liberation Mono" font-size="6.3" letter-spacing="-0.190" fill="#cc7832" stroke="#cc7832" stroke-width="0.13" xml:space="preserve">class</text>
<text x="502.79" y="109.83" font-family="Liberation Mono" font-size="6.3" letter-spacing="-0.190" fill="#a9b7c6" stroke="#a9b7c6" stroke-width="0.13" xml:space="preserve">)</text>
<text x="506.38" y="109.83" font-family="Liberation Mono" font-size="6.3" letter-spacing="-0.190" fill="#cc7832" stroke="#cc7832" stroke-width="0.13" xml:space="preserve">;</text>
<text x="194.80" y="116.65" font-family="Liberation Sans" font-size="5.6" font-weight="normal" fill="#686b6e" text-anchor="end"  stroke="#686b6e" stroke-width="0.22">24</text>
<text x="212.00" y="116.65" font-family="Liberation Mono" font-size="6.3" letter-spacing="-0.190" fill="#a9b7c6" stroke="#a9b7c6" stroke-width="0.13" xml:space="preserve">    timestampEventDeserializer.setRemoveTypeHeaders(</text>
<text x="398.68" y="116.65" font-family="Liberation Mono" font-size="6.3" letter-spacing="-0.190" fill="#cc7832" stroke="#cc7832" stroke-width="0.13" xml:space="preserve">false</text>
<text x="416.63" y="116.65" font-family="Liberation Mono" font-size="6.3" letter-spacing="-0.190" fill="#a9b7c6" stroke="#a9b7c6" stroke-width="0.13" xml:space="preserve">)</text>
<text x="420.22" y="116.65" font-family="Liberation Mono" font-size="6.3" letter-spacing="-0.190" fill="#cc7832" stroke="#cc7832" stroke-width="0.13" xml:space="preserve">;</text>
<text x="194.80" y="123.47" font-family="Liberation Sans" font-size="5.6" font-weight="normal" fill="#686b6e" text-anchor="end"  stroke="#686b6e" stroke-width="0.22">25</text>
<text x="212.00" y="123.47" font-family="Liberation Mono" font-size="6.3" letter-spacing="-0.190" fill="#a9b7c6" stroke="#a9b7c6" stroke-width="0.13" xml:space="preserve">    timestampEventDeserializer.addTrustedPackages(</text>
<text x="391.50" y="123.47" font-family="Liberation Mono" font-size="6.3" letter-spacing="-0.190" fill="#6a8759" stroke="#6a8759" stroke-width="0.13" xml:space="preserve">&quot;*&quot;</text>
<text x="402.27" y="123.47" font-family="Liberation Mono" font-size="6.3" letter-spacing="-0.190" fill="#a9b7c6" stroke="#a9b7c6" stroke-width="0.13" xml:space="preserve">)</text>
<text x="405.86" y="123.47" font-family="Liberation Mono" font-size="6.3" letter-spacing="-0.190" fill="#cc7832" stroke="#cc7832" stroke-width="0.13" xml:space="preserve">;</text>
<text x="194.80" y="130.30" font-family="Liberation Sans" font-size="5.6" font-weight="normal" fill="#686b6e" text-anchor="end"  stroke="#686b6e" stroke-width="0.22">26</text>
<text x="212.00" y="130.30" font-family="Liberation Mono" font-size="6.3" letter-spacing="-0.190" fill="#a9b7c6" stroke="#a9b7c6" stroke-width="0.13" xml:space="preserve">    timestampEventDeserializer.setUseTypeMapperForKey(</text>
<text x="405.86" y="130.30" font-family="Liberation Mono" font-size="6.3" letter-spacing="-0.190" fill="#cc7832" stroke="#cc7832" stroke-width="0.13" xml:space="preserve">true</text>
<text x="420.22" y="130.30" font-family="Liberation Mono" font-size="6.3" letter-spacing="-0.190" fill="#a9b7c6" stroke="#a9b7c6" stroke-width="0.13" xml:space="preserve">)</text>
<text x="423.81" y="130.30" font-family="Liberation Mono" font-size="6.3" letter-spacing="-0.190" fill="#cc7832" stroke="#cc7832" stroke-width="0.13" xml:space="preserve">;</text>
<text x="194.80" y="137.12" font-family="Liberation Sans" font-size="5.6" font-weight="normal" fill="#686b6e" text-anchor="end"  stroke="#686b6e" stroke-width="0.22">27</text>
<text x="194.80" y="143.95" font-family="Liberation Sans" font-size="5.6" font-weight="normal" fill="#686b6e" text-anchor="end"  stroke="#686b6e" stroke-width="0.22">28</text>
<text x="226.36" y="143.95" font-family="Liberation Mono" font-size="6.3" letter-spacing="-0.190" fill="#cc7832" stroke="#cc7832" stroke-width="0.13" xml:space="preserve">var</text>
<text x="237.13" y="143.95" font-family="Liberation Mono" font-size="6.3" letter-spacing="-0.190" fill="#a9b7c6" stroke="#a9b7c6" stroke-width="0.13" xml:space="preserve"> props = </text>
<text x="269.44" y="143.95" font-family="Liberation Mono" font-size="6.3" letter-spacing="-0.190" fill="#cc7832" stroke="#cc7832" stroke-width="0.13" xml:space="preserve">new</text>
<text x="280.21" y="143.95" font-family="Liberation Mono" font-size="6.3" letter-spacing="-0.190" fill="#a9b7c6" stroke="#a9b7c6" stroke-width="0.13" xml:space="preserve"> HashMap</text>
<rect x="308.63" y="138.55" width="11.37" height="6.33" fill="#3a3a3a" />
<text x="308.93" y="143.95" font-family="Liberation Mono" font-size="6.3" letter-spacing="-0.190" fill="#8e8e8e" stroke="#8e8e8e" stroke-width="0.13" xml:space="preserve">&lt;~&gt;</text>
<text x="319.70" y="143.95" font-family="Liberation Mono" font-size="6.3" letter-spacing="-0.190" fill="#a9b7c6" stroke="#a9b7c6" stroke-width="0.13" xml:space="preserve">()</text>
<text x="326.88" y="143.95" font-family="Liberation Mono" font-size="6.3" letter-spacing="-0.190" fill="#cc7832" stroke="#cc7832" stroke-width="0.13" xml:space="preserve">;</text>
<text x="194.80" y="150.78" font-family="Liberation Sans" font-size="5.6" font-weight="normal" fill="#686b6e" text-anchor="end"  stroke="#686b6e" stroke-width="0.22">29</text>
<text x="212.00" y="150.78" font-family="Liberation Mono" font-size="6.3" letter-spacing="-0.190" fill="#a9b7c6" stroke="#a9b7c6" stroke-width="0.13" xml:space="preserve">    props.put(ConsumerConfig.</text>
<text x="316.11" y="150.78" font-family="Liberation Mono" font-size="6.3" letter-spacing="-0.190" fill="#9876aa" stroke="#9876aa" stroke-width="0.13" xml:space="preserve" font-style="italic">BOOTSTRAP_SERVERS_CONFIG</text>
<text x="402.27" y="150.78" font-family="Liberation Mono" font-size="6.3" letter-spacing="-0.190" fill="#cc7832" stroke="#cc7832" stroke-width="0.13" xml:space="preserve">,</text>
<text x="409.45" y="150.78" font-family="Liberation Mono" font-size="6.3" letter-spacing="-0.190" fill="#6a8759" stroke="#6a8759" stroke-width="0.13" xml:space="preserve">&quot;localhost:9092&quot;</text>
<text x="466.89" y="150.78" font-family="Liberation Mono" font-size="6.3" letter-spacing="-0.190" fill="#a9b7c6" stroke="#a9b7c6" stroke-width="0.13" xml:space="preserve">)</text>
<text x="470.48" y="150.78" font-family="Liberation Mono" font-size="6.3" letter-spacing="-0.190" fill="#cc7832" stroke="#cc7832" stroke-width="0.13" xml:space="preserve">;</text>
<text x="194.80" y="157.60" font-family="Liberation Sans" font-size="5.6" font-weight="normal" fill="#686b6e" text-anchor="end"  stroke="#686b6e" stroke-width="0.22">30</text>
<text x="212.00" y="157.60" font-family="Liberation Mono" font-size="6.3" letter-spacing="-0.190" fill="#a9b7c6" stroke="#a9b7c6" stroke-width="0.13" xml:space="preserve">    props.put(ConsumerConfig.</text>
<text x="316.11" y="157.60" font-family="Liberation Mono" font-size="6.3" letter-spacing="-0.190" fill="#9876aa" stroke="#9876aa" stroke-width="0.13" xml:space="preserve" font-style="italic">KEY_DESERIALIZER_CLASS_CONFIG</text>
<text x="420.22" y="157.60" font-family="Liberation Mono" font-size="6.3" letter-spacing="-0.190" fill="#cc7832" stroke="#cc7832" stroke-width="0.13" xml:space="preserve">,</text>
<text x="423.81" y="157.60" font-family="Liberation Mono" font-size="6.3" letter-spacing="-0.190" fill="#a9b7c6" stroke="#a9b7c6" stroke-width="0.13" xml:space="preserve"> StringDeserializer.</text>
<text x="495.61" y="157.60" font-family="Liberation Mono" font-size="6.3" letter-spacing="-0.190" fill="#cc7832" stroke="#cc7832" stroke-width="0.13" xml:space="preserve">class</text>
<text x="513.56" y="157.60" font-family="Liberation Mono" font-size="6.3" letter-spacing="-0.190" fill="#a9b7c6" stroke="#a9b7c6" stroke-width="0.13" xml:space="preserve">)</text>
<text x="517.15" y="157.60" font-family="Liberation Mono" font-size="6.3" letter-spacing="-0.190" fill="#cc7832" stroke="#cc7832" stroke-width="0.13" xml:space="preserve">;</text>
<text x="194.80" y="164.43" font-family="Liberation Sans" font-size="5.6" font-weight="normal" fill="#686b6e" text-anchor="end"  stroke="#686b6e" stroke-width="0.22">31</text>
<text x="212.00" y="164.43" font-family="Liberation Mono" font-size="6.3" letter-spacing="-0.190" fill="#a9b7c6" stroke="#a9b7c6" stroke-width="0.13" xml:space="preserve">    props.put(ConsumerConfig.</text>
<text x="316.11" y="164.43" font-family="Liberation Mono" font-size="6.3" letter-spacing="-0.190" fill="#9876aa" stroke="#9876aa" stroke-width="0.13" xml:space="preserve" font-style="italic">VALUE_DESERIALIZER_CLASS_CONFIG</text>
<text x="427.40" y="164.43" font-family="Liberation Mono" font-size="6.3" letter-spacing="-0.190" fill="#cc7832" stroke="#cc7832" stroke-width="0.13" xml:space="preserve">,</text>
<text x="430.99" y="164.43" font-family="Liberation Mono" font-size="6.3" letter-spacing="-0.190" fill="#a9b7c6" stroke="#a9b7c6" stroke-width="0.13" xml:space="preserve"> JsonDeserializer.</text>
<text x="495.61" y="164.43" font-family="Liberation Mono" font-size="6.3" letter-spacing="-0.190" fill="#cc7832" stroke="#cc7832" stroke-width="0.13" xml:space="preserve">class</text>
<text x="513.56" y="164.43" font-family="Liberation Mono" font-size="6.3" letter-spacing="-0.190" fill="#a9b7c6" stroke="#a9b7c6" stroke-width="0.13" xml:space="preserve">)</text>
<text x="517.15" y="164.43" font-family="Liberation Mono" font-size="6.3" letter-spacing="-0.190" fill="#cc7832" stroke="#cc7832" stroke-width="0.13" xml:space="preserve">;</text>
<text x="194.80" y="171.25" font-family="Liberation Sans" font-size="5.6" font-weight="normal" fill="#686b6e" text-anchor="end"  stroke="#686b6e" stroke-width="0.22">32</text>
<text x="212.00" y="171.25" font-family="Liberation Mono" font-size="6.3" letter-spacing="-0.190" fill="#a9b7c6" stroke="#a9b7c6" stroke-width="0.13" xml:space="preserve">    props.put(ConsumerConfig.</text>
<text x="316.11" y="171.25" font-family="Liberation Mono" font-size="6.3" letter-spacing="-0.190" fill="#9876aa" stroke="#9876aa" stroke-width="0.13" xml:space="preserve" font-style="italic">GROUP_ID_CONFIG</text>
<text x="369.96" y="171.25" font-family="Liberation Mono" font-size="6.3" letter-spacing="-0.190" fill="#cc7832" stroke="#cc7832" stroke-width="0.13" xml:space="preserve">,</text>
<text x="377.14" y="171.25" font-family="Liberation Mono" font-size="6.3" letter-spacing="-0.190" fill="#6a8759" stroke="#6a8759" stroke-width="0.13" xml:space="preserve">&quot;tutorialGroup&quot;</text>
<text x="430.99" y="171.25" font-family="Liberation Mono" font-size="6.3" letter-spacing="-0.190" fill="#a9b7c6" stroke="#a9b7c6" stroke-width="0.13" xml:space="preserve">)</text>
<text x="434.58" y="171.25" font-family="Liberation Mono" font-size="6.3" letter-spacing="-0.190" fill="#cc7832" stroke="#cc7832" stroke-width="0.13" xml:space="preserve">;</text>
<text x="194.80" y="178.08" font-family="Liberation Sans" font-size="5.6" font-weight="normal" fill="#686b6e" text-anchor="end"  stroke="#686b6e" stroke-width="0.22">33</text>
<text x="194.80" y="184.90" font-family="Liberation Sans" font-size="5.6" font-weight="normal" fill="#686b6e" text-anchor="end"  stroke="#686b6e" stroke-width="0.22">34</text>
<text x="226.36" y="184.90" font-family="Liberation Mono" font-size="6.3" letter-spacing="-0.190" fill="#cc7832" stroke="#cc7832" stroke-width="0.13" xml:space="preserve">return new</text>
<text x="262.26" y="184.90" font-family="Liberation Mono" font-size="6.3" letter-spacing="-0.190" fill="#a9b7c6" stroke="#a9b7c6" stroke-width="0.13" xml:space="preserve"> DefaultKafkaConsumerFactory&lt;&gt;(props</text>
<text x="391.50" y="184.90" font-family="Liberation Mono" font-size="6.3" letter-spacing="-0.190" fill="#cc7832" stroke="#cc7832" stroke-width="0.13" xml:space="preserve">,</text>
<text x="398.68" y="184.90" font-family="Liberation Mono" font-size="6.3" letter-spacing="-0.190" fill="#cc7832" stroke="#cc7832" stroke-width="0.13" xml:space="preserve">new</text>
<text x="409.45" y="184.90" font-family="Liberation Mono" font-size="6.3" letter-spacing="-0.190" fill="#a9b7c6" stroke="#a9b7c6" stroke-width="0.13" xml:space="preserve"> StringDeserializer()</text>
<text x="484.84" y="184.90" font-family="Liberation Mono" font-size="6.3" letter-spacing="-0.190" fill="#cc7832" stroke="#cc7832" stroke-width="0.13" xml:space="preserve">,</text>
<text x="488.43" y="184.90" font-family="Liberation Mono" font-size="6.3" letter-spacing="-0.190" fill="#a9b7c6" stroke="#a9b7c6" stroke-width="0.13" xml:space="preserve"> timestampEventDeserializer)</text>
<text x="588.95" y="184.90" font-family="Liberation Mono" font-size="6.3" letter-spacing="-0.190" fill="#cc7832" stroke="#cc7832" stroke-width="0.13" xml:space="preserve">;</text>
<text x="194.80" y="191.73" font-family="Liberation Sans" font-size="5.6" font-weight="normal" fill="#686b6e" text-anchor="end"  stroke="#686b6e" stroke-width="0.22">35</text>
<text x="212.00" y="191.73" font-family="Liberation Mono" font-size="6.3" letter-spacing="-0.190" fill="#a9b7c6" stroke="#a9b7c6" stroke-width="0.13" xml:space="preserve">  }</text>
<text x="194.80" y="198.55" font-family="Liberation Sans" font-size="5.6" font-weight="normal" fill="#686b6e" text-anchor="end"  stroke="#686b6e" stroke-width="0.22">36</text>
<text x="194.80" y="205.38" font-family="Liberation Sans" font-size="5.6" font-weight="normal" fill="#686b6e" text-anchor="end"  stroke="#686b6e" stroke-width="0.22">37</text>
<text x="219.18" y="205.38" font-family="Liberation Mono" font-size="6.3" letter-spacing="-0.190" fill="#bbb529" stroke="#bbb529" stroke-width="0.13" xml:space="preserve">@Bean</text>
<text x="194.80" y="212.20" font-family="Liberation Sans" font-size="5.6" font-weight="normal" fill="#686b6e" text-anchor="end"  stroke="#686b6e" stroke-width="0.22">38</text>
<text x="219.18" y="212.20" font-family="Liberation Mono" font-size="6.3" letter-spacing="-0.190" fill="#cc7832" stroke="#cc7832" stroke-width="0.13" xml:space="preserve">public</text>
<text x="240.72" y="212.20" font-family="Liberation Mono" font-size="6.3" letter-spacing="-0.190" fill="#a9b7c6" stroke="#a9b7c6" stroke-width="0.13" xml:space="preserve"> KafkaListenerContainerFactory&lt;ConcurrentMessageListenerContainer&lt;String</text>
<text x="499.20" y="212.20" font-family="Liberation Mono" font-size="6.3" letter-spacing="-0.190" fill="#cc7832" stroke="#cc7832" stroke-width="0.13" xml:space="preserve">,</text>
<text x="502.79" y="212.20" font-family="Liberation Mono" font-size="6.3" letter-spacing="-0.190" fill="#a9b7c6" stroke="#a9b7c6" stroke-width="0.13" xml:space="preserve"> TimestampEvent&gt;&gt; </text>
<text x="567.41" y="212.20" font-family="Liberation Mono" font-size="6.3" letter-spacing="-0.190" fill="#ffc66d" stroke="#ffc66d" stroke-width="0.13" xml:space="preserve">kafkaListenerContainerFactory</text>
<text x="671.52" y="212.20" font-family="Liberation Mono" font-size="6.3" letter-spacing="-0.190" fill="#a9b7c6" stroke="#a9b7c6" stroke-width="0.13" xml:space="preserve">() {</text>
<text x="194.80" y="219.03" font-family="Liberation Sans" font-size="5.6" font-weight="normal" fill="#686b6e" text-anchor="end"  stroke="#686b6e" stroke-width="0.22">39</text>
<text x="226.36" y="219.03" font-family="Liberation Mono" font-size="6.3" letter-spacing="-0.190" fill="#cc7832" stroke="#cc7832" stroke-width="0.13" xml:space="preserve">var</text>
<text x="237.13" y="219.03" font-family="Liberation Mono" font-size="6.3" letter-spacing="-0.190" fill="#a9b7c6" stroke="#a9b7c6" stroke-width="0.13" xml:space="preserve"> factory = </text>
<text x="276.62" y="219.03" font-family="Liberation Mono" font-size="6.3" letter-spacing="-0.190" fill="#cc7832" stroke="#cc7832" stroke-width="0.13" xml:space="preserve">new</text>
<text x="287.39" y="219.03" font-family="Liberation Mono" font-size="6.3" letter-spacing="-0.190" fill="#a9b7c6" stroke="#a9b7c6" stroke-width="0.13" xml:space="preserve"> ConcurrentKafkaListenerContainerFactory</text>
<rect x="430.69" y="213.62" width="11.37" height="6.33" fill="#3a3a3a" />
<text x="430.99" y="219.03" font-family="Liberation Mono" font-size="6.3" letter-spacing="-0.190" fill="#8e8e8e" stroke="#8e8e8e" stroke-width="0.13" xml:space="preserve">&lt;~&gt;</text>
<text x="441.76" y="219.03" font-family="Liberation Mono" font-size="6.3" letter-spacing="-0.190" fill="#a9b7c6" stroke="#a9b7c6" stroke-width="0.13" xml:space="preserve">()</text>
<text x="448.94" y="219.03" font-family="Liberation Mono" font-size="6.3" letter-spacing="-0.190" fill="#cc7832" stroke="#cc7832" stroke-width="0.13" xml:space="preserve">;</text>
<text x="194.80" y="225.85" font-family="Liberation Sans" font-size="5.6" font-weight="normal" fill="#686b6e" text-anchor="end"  stroke="#686b6e" stroke-width="0.22">40</text>
<text x="212.00" y="225.85" font-family="Liberation Mono" font-size="6.3" letter-spacing="-0.190" fill="#a9b7c6" stroke="#a9b7c6" stroke-width="0.13" xml:space="preserve">    factory.setConsumerFactory(consumerFactory())</text>
<text x="387.91" y="225.85" font-family="Liberation Mono" font-size="6.3" letter-spacing="-0.190" fill="#cc7832" stroke="#cc7832" stroke-width="0.13" xml:space="preserve">;</text>
<text x="194.80" y="232.68" font-family="Liberation Sans" font-size="5.6" font-weight="normal" fill="#686b6e" text-anchor="end"  stroke="#686b6e" stroke-width="0.22">41</text>
<text x="226.36" y="232.68" font-family="Liberation Mono" font-size="6.3" letter-spacing="-0.190" fill="#cc7832" stroke="#cc7832" stroke-width="0.13" xml:space="preserve">return</text>
<text x="247.90" y="232.68" font-family="Liberation Mono" font-size="6.3" letter-spacing="-0.190" fill="#a9b7c6" stroke="#a9b7c6" stroke-width="0.13" xml:space="preserve"> factory</text>
<text x="276.62" y="232.68" font-family="Liberation Mono" font-size="6.3" letter-spacing="-0.190" fill="#cc7832" stroke="#cc7832" stroke-width="0.13" xml:space="preserve">;</text>
<text x="194.80" y="239.50" font-family="Liberation Sans" font-size="5.6" font-weight="normal" fill="#686b6e" text-anchor="end"  stroke="#686b6e" stroke-width="0.22">42</text>
<text x="212.00" y="239.50" font-family="Liberation Mono" font-size="6.3" letter-spacing="-0.190" fill="#a9b7c6" stroke="#a9b7c6" stroke-width="0.13" xml:space="preserve">  }</text>
<text x="194.80" y="246.33" font-family="Liberation Sans" font-size="5.6" font-weight="normal" fill="#686b6e" text-anchor="end"  stroke="#686b6e" stroke-width="0.22">43</text>
<text x="194.80" y="253.15" font-family="Liberation Sans" font-size="5.6" font-weight="normal" fill="#686b6e" text-anchor="end"  stroke="#686b6e" stroke-width="0.22">44</text>
<text x="219.18" y="253.15" font-family="Liberation Mono" font-size="6.3" letter-spacing="-0.190" fill="#bbb529" stroke="#bbb529" stroke-width="0.13" xml:space="preserve">@Bean</text>
<text x="194.80" y="259.98" font-family="Liberation Sans" font-size="5.6" font-weight="normal" fill="#686b6e" text-anchor="end"  stroke="#686b6e" stroke-width="0.22">45</text>
<text x="219.18" y="259.98" font-family="Liberation Mono" font-size="6.3" letter-spacing="-0.190" fill="#cc7832" stroke="#cc7832" stroke-width="0.13" xml:space="preserve">public</text>
<text x="240.72" y="259.98" font-family="Liberation Mono" font-size="6.3" letter-spacing="-0.190" fill="#a9b7c6" stroke="#a9b7c6" stroke-width="0.13" xml:space="preserve"> NewTopic </text>
<text x="276.62" y="259.98" font-family="Liberation Mono" font-size="6.3" letter-spacing="-0.190" fill="#ffc66d" stroke="#ffc66d" stroke-width="0.13" xml:space="preserve">timestampTopic</text>
<text x="326.88" y="259.98" font-family="Liberation Mono" font-size="6.3" letter-spacing="-0.190" fill="#a9b7c6" stroke="#a9b7c6" stroke-width="0.13" xml:space="preserve">() {</text>
<text x="194.80" y="266.80" font-family="Liberation Sans" font-size="5.6" font-weight="normal" fill="#686b6e" text-anchor="end"  stroke="#686b6e" stroke-width="0.22">46</text>
<text x="226.36" y="266.80" font-family="Liberation Mono" font-size="6.3" letter-spacing="-0.190" fill="#cc7832" stroke="#cc7832" stroke-width="0.13" xml:space="preserve">return</text>
<text x="247.90" y="266.80" font-family="Liberation Mono" font-size="6.3" letter-spacing="-0.190" fill="#a9b7c6" stroke="#a9b7c6" stroke-width="0.13" xml:space="preserve"> TopicBuilder.name(</text>
<text x="316.11" y="266.80" font-family="Liberation Mono" font-size="6.3" letter-spacing="-0.190" fill="#6a8759" stroke="#6a8759" stroke-width="0.13" xml:space="preserve">&quot;timestamp&quot;</text>
<text x="355.60" y="266.80" font-family="Liberation Mono" font-size="6.3" letter-spacing="-0.190" fill="#a9b7c6" stroke="#a9b7c6" stroke-width="0.13" xml:space="preserve">)</text>
<text x="194.80" y="273.62" font-family="Liberation Sans" font-size="5.6" font-weight="normal" fill="#686b6e" text-anchor="end"  stroke="#686b6e" stroke-width="0.22">47</text>
<text x="212.00" y="273.62" font-family="Liberation Mono" font-size="6.3" letter-spacing="-0.190" fill="#a9b7c6" stroke="#a9b7c6" stroke-width="0.13" xml:space="preserve">                       .build()</text>
<text x="323.29" y="273.62" font-family="Liberation Mono" font-size="6.3" letter-spacing="-0.190" fill="#cc7832" stroke="#cc7832" stroke-width="0.13" xml:space="preserve">;</text>
<text x="194.80" y="280.45" font-family="Liberation Sans" font-size="5.6" font-weight="normal" fill="#686b6e" text-anchor="end"  stroke="#686b6e" stroke-width="0.22">48</text>
<text x="212.00" y="280.45" font-family="Liberation Mono" font-size="6.3" letter-spacing="-0.190" fill="#a9b7c6" stroke="#a9b7c6" stroke-width="0.13" xml:space="preserve">  }</text>
<text x="194.80" y="287.27" font-family="Liberation Sans" font-size="5.6" font-weight="normal" fill="#686b6e" text-anchor="end"  stroke="#686b6e" stroke-width="0.22">49</text>
<text x="194.80" y="294.10" font-family="Liberation Sans" font-size="5.6" font-weight="normal" fill="#686b6e" text-anchor="end"  stroke="#686b6e" stroke-width="0.22">50</text>
<text x="212.00" y="294.10" font-family="Liberation Mono" font-size="6.3" letter-spacing="-0.190" fill="#a9b7c6" stroke="#a9b7c6" stroke-width="0.13" xml:space="preserve">}</text>
<text x="194.80" y="300.93" font-family="Liberation Sans" font-size="5.6" font-weight="normal" fill="#686b6e" text-anchor="end"  stroke="#686b6e" stroke-width="0.22">51</text>
</g>
<rect x="632.00" y="33.80" width="0.50" height="372.50" fill="#323436" />
<rect x="639.30" y="33.80" width="0.70" height="388.00" fill="#45484a" />
<rect x="634.00" y="38.00" width="3.40" height="4.00" fill="#a5b1b8" />
<text transform="translate(634.40,44.30) rotate(90)" font-family="Liberation Sans" font-size="4.7" fill="#bbbbbb" stroke="#bbbbbb" stroke-width="0.12" textLength="17.40" lengthAdjust="spacing">Database</text>
<rect x="634.00" y="71.00" width="3.40" height="3.30" fill="#a5b1b8" />
<text transform="translate(634.40,75.90) rotate(90)" font-family="Liberation Sans" font-size="4.7" fill="#bbbbbb" stroke="#bbbbbb" stroke-width="0.12" textLength="28.90" lengthAdjust="spacing">Maven Projects</text>
<rect x="634.00" y="113.10" width="3.40" height="3.30" fill="#a5b1b8" />
<text transform="translate(634.40,119.10) rotate(90)" font-family="Liberation Sans" font-size="4.7" fill="#bbbbbb" stroke="#bbbbbb" stroke-width="0.12" textLength="16.70" lengthAdjust="spacing">Ant Build</text>
<rect x="20.00" y="406.20" width="620.00" height="0.60" fill="#323232" />
<rect x="20.00" y="413.50" width="620.00" height="0.60" fill="#2b2b2b" />
<rect x="30.90" y="408.20" width="4.00" height="3.60" fill="#bbbbbb" />
<rect x="31.60" y="408.90" width="1.20" height="1.20" fill="#3c3f41" />
<text x="36.40" y="411.80" font-family="Liberation Sans" font-size="5.0" font-weight="normal" fill="#bbbbbb" textLength="17.60" lengthAdjust="spacing" >Terminal</text>
<path d="M61.2 410.2h5.2c-0.3 1.3-1.3 1.9-2.8 1.9-1.4 0-2.2-0.8-2.4-1.9z" fill="#3592c4" />
<rect x="62.60" y="408.80" width="1.10" height="1.10" fill="#3592c4" />
<rect x="63.90" y="408.80" width="1.10" height="1.10" fill="#3592c4" />
<rect x="63.90" y="407.60" width="1.10" height="1.10" fill="#3592c4" />
<text x="67.20" y="411.80" font-family="Liberation Sans" font-size="5.0" font-weight="normal" fill="#bbbbbb" textLength="14.40" lengthAdjust="spacing" >Docker</text>
<rect x="88.60" y="408.00" width="4.40" height="3.80" fill="none" rx="1.2" stroke="#c75450" stroke-width="0.6"/>
<rect x="88.80" y="409.70" width="4.00" height="0.50" fill="#c75450" />
<text x="93.20" y="411.80" font-family="Liberation Sans" font-size="5.0" font-weight="normal" fill="#bbbbbb" textLength="19.50" lengthAdjust="spacing" >SonarLint</text>
<path d="M120.4 411.8c0-2.2 1.8-3.4 4.6-3.4 0 2.2-1.4 3.6-4 3.6z" fill="#a9adb0" />
<path d="M120.6 411.6l2.6-2" fill="none" stroke="#3c3f41" stroke-width="0.4" />
<text x="125.50" y="411.80" font-family="Liberation Sans" font-size="5.0" font-weight="normal" fill="#bbbbbb" textLength="13.00" lengthAdjust="spacing" >Spring</text>
<path d="M147.5 408.3v3.5l2.6-1.75z" fill="#bbbbbb" />
<path d="M152 409l1 1-1 1 M153.5 411.5h1.5" fill="none" stroke="#bbbbbb" stroke-width="0.5" />
<text x="155.80" y="411.80" font-family="Liberation Sans" font-size="5.0" font-weight="normal" fill="#bbbbbb" textLength="7.50" lengthAdjust="spacing" >Run</text>
<rect x="173.20" y="408.40" width="2.80" height="3.40" fill="none" stroke="#bbbbbb" stroke-width="0.5"/>
<text x="178.50" y="411.80" font-family="Liberation Sans" font-size="5.0" font-weight="normal" fill="#bbbbbb" textLength="15.50" lengthAdjust="spacing" >6: TODO</text>
<circle cx="606.80" cy="409.90" r="1.80" fill="none" stroke="#bbbbbb" stroke-width="0.6"/>
<text x="610.90" y="411.80" font-family="Liberation Sans" font-size="4.8" font-weight="normal" fill="#bbbbbb" textLength="18.10" lengthAdjust="spacing"  stroke="#bbbbbb" stroke-width="0.12">Event Log</text>
<rect x="22.40" y="415.60" width="4.00" height="3.60" fill="none" stroke="#a5a8aa" stroke-width="0.6"/>
<text x="535.00" y="419.30" font-family="Liberation Sans" font-size="4.5" font-weight="normal" fill="#bbbbbb"  stroke="#bbbbbb" stroke-width="0.1">19:34</text>
<text x="550.60" y="419.30" font-family="Liberation Sans" font-size="4.6" font-weight="normal" fill="#bbbbbb"  stroke="#bbbbbb" stroke-width="0.1">LF</text>
<path d="M557 416.8l0.7 -0.8 0.7 0.8 M557 418.2l0.7 0.8 0.7-0.8" fill="none" stroke="#8a8d8f" stroke-width="0.4" />
<text x="561.20" y="419.30" font-family="Liberation Sans" font-size="4.6" font-weight="normal" fill="#bbbbbb"  stroke="#bbbbbb" stroke-width="0.1">UTF-8</text>
<path d="M576 416.8l0.7 -0.8 0.7 0.8 M576 418.2l0.7 0.8 0.7-0.8" fill="none" stroke="#8a8d8f" stroke-width="0.4" />
<text x="583.00" y="419.30" font-family="Liberation Sans" font-size="4.5" font-weight="normal" fill="#bbbbbb"  stroke="#bbbbbb" stroke-width="0.1">Git: main</text>
<path d="M603 416.8l0.7 -0.8 0.7 0.8 M603 418.2l0.7 0.8 0.7-0.8" fill="none" stroke="#8a8d8f" stroke-width="0.4" />
<rect x="607.50" y="417.00" width="3.00" height="2.50" fill="#bbbbbb" />
<path d="M608 417v-1a1 1 0 0 1 2 0" fill="none" stroke="#bbbbbb" stroke-width="0.5" />
<rect x="616.50" y="415.80" width="2.80" height="3.80" fill="none" stroke="#a5a8aa" stroke-width="0.5"/>
<circle cx="625.50" cy="417.60" r="1.70" fill="none" stroke="#a5a8aa" stroke-width="0.5"/>
<circle cx="635.10" cy="417.60" r="2.10" fill="#c9413d" stroke="#a83531" stroke-width="0.4"/>
</g>
<rect x="628.00" y="43.80" width="3.60" height="3.20" fill="#e0a31f" />
<rect x="627.00" y="83.00" width="5.20" height="0.80" fill="#4d9b4f" />
<rect x="627.00" y="110.00" width="5.20" height="0.80" fill="#c6952f" /></svg></body></html>
